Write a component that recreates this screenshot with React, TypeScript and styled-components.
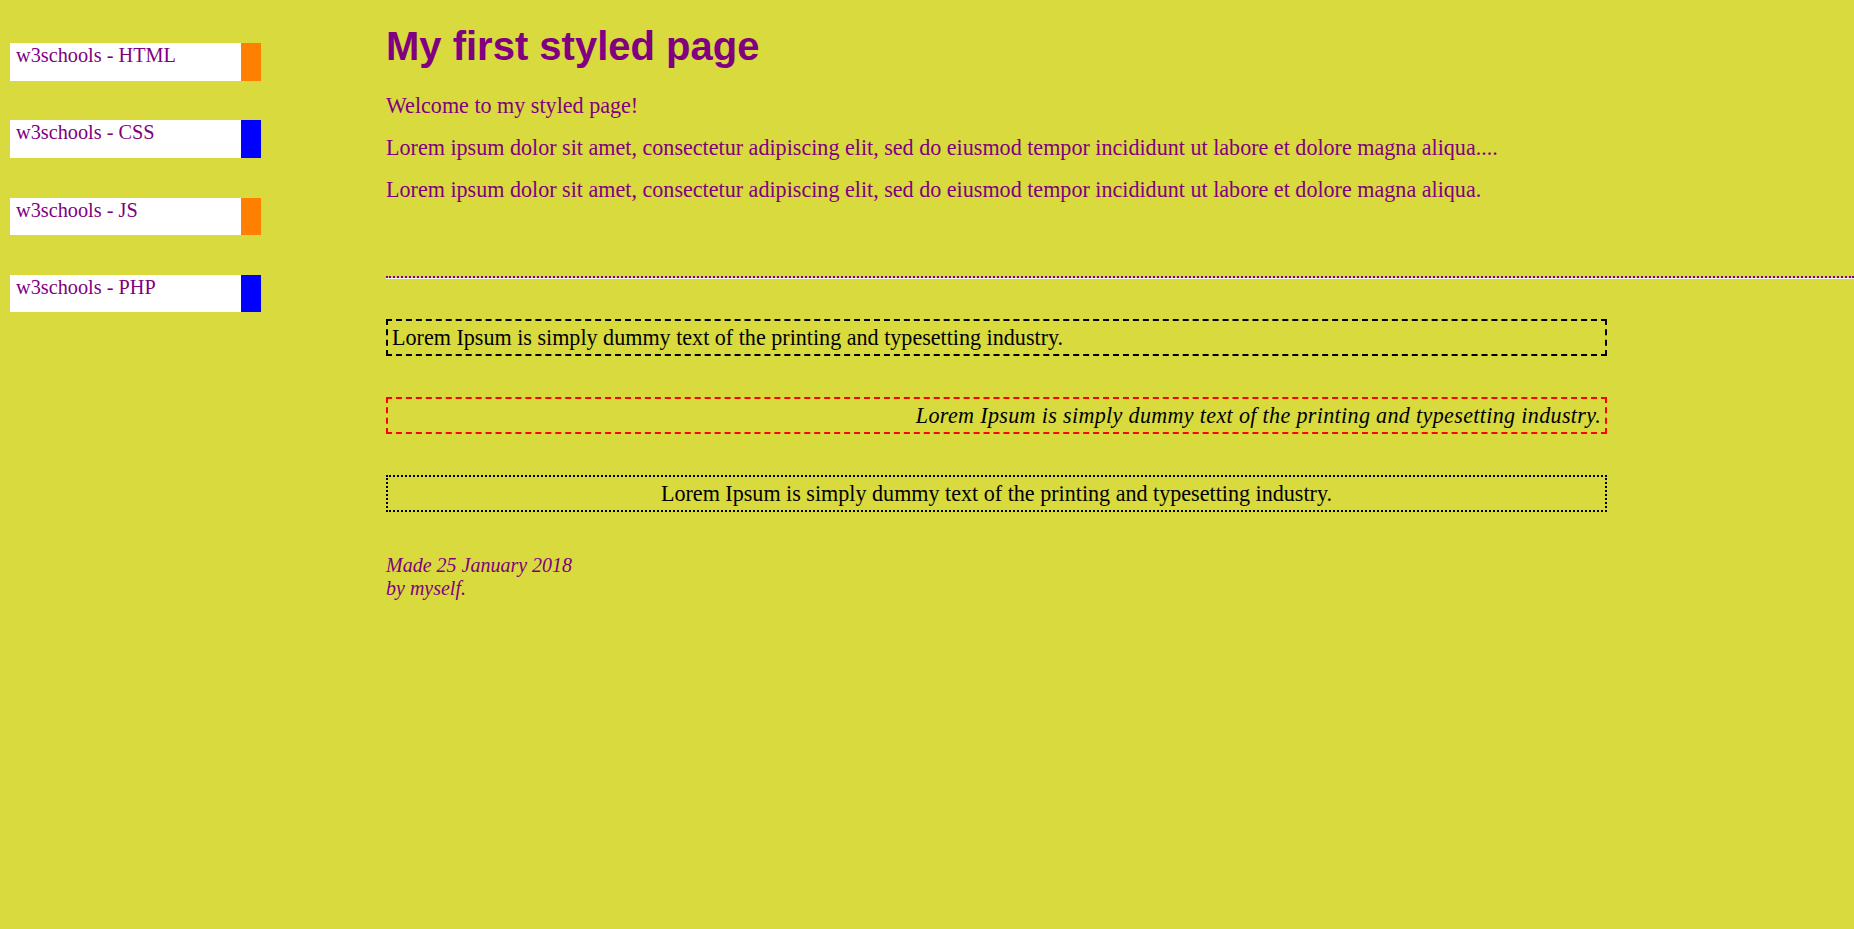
import React from "react";
import styled, { createGlobalStyle } from "styled-components";

const GlobalStyle = createGlobalStyle`
  html, body {
    margin: 0;
    padding: 0;
    background: #d8da3d;
  }
  body {
    font-family: "Liberation Serif", "Times New Roman", serif;
    color: #800080;
  }
`;

const Page = styled.div`
  display: grid;
  grid-template-columns: 386px 1fr;
  min-height: 929px;
  background: #d8da3d;
`;

const NavList = styled.ul`
  list-style: none;
  margin: 0;
  padding: 43px 0 0 10px;
  display: flex;
  flex-direction: column;
  gap: 39.8px;
`;

const NavItem = styled.li<{ $accent: string }>`
  box-sizing: border-box;
  width: 251px;
  height: 37.5px;
  background: #ffffff;
  border-right: 20px solid ${(p) => p.$accent};
  padding: 1px 6px 0;
  font-size: 20.3px;
  line-height: 22px;
`;

const NavLink = styled.a`
  color: #800080;
  text-decoration: none;
`;

const Main = styled.main`
  padding-top: 23px;
  min-width: 0;
`;

const Title = styled.h1`
  margin: 0 0 26px;
  font-family: "Liberation Sans", Arial, sans-serif;
  font-weight: bold;
  font-size: 40px;
  line-height: 46px;
  color: #800080;
`;

const Para = styled.p`
  margin: 0 0 20px;
  font-size: 22.1px;
  line-height: 22px;
  color: #800080;
  white-space: nowrap;
`;

const Rule = styled.hr`
  margin: 75px 0 40px;
  height: 0;
  border: none;
  border-top: 2px dotted #800080;
  border-bottom: 1px solid #f4f4f4;
`;

const Boxes = styled.div`
  display: flex;
  flex-direction: column;
  gap: 41px;
`;

const Box = styled.div<{
  $line: "dashed" | "dotted";
  $color: string;
  $align: "left" | "center" | "right";
  $italic?: boolean;
}>`
  box-sizing: border-box;
  width: 1221px;
  height: 37px;
  border: 2px ${(p) => p.$line} ${(p) => p.$color};
  padding: 5px 4px 4px;
  font-size: 22.1px;
  line-height: 23px;
  color: #000000;
  white-space: nowrap;
  text-align: ${(p) => p.$align};
  font-style: ${(p) => (p.$italic ? "italic" : "normal")};
  letter-spacing: ${(p) => (p.$italic ? "0.33px" : "normal")};
`;

const Footer = styled.address`
  margin-top: 42px;
  font-family: "Liberation Serif", "Times New Roman", serif;
  font-style: italic;
  font-size: 20px;
  line-height: 23px;
  color: #800080;
`;

const navItems = [
  { label: "w3schools - HTML", accent: "#ff8000" },
  { label: "w3schools - CSS", accent: "#0000ff" },
  { label: "w3schools - JS", accent: "#ff8000" },
  { label: "w3schools - PHP", accent: "#0000ff" },
];

const lorem = "Lorem Ipsum is simply dummy text of the printing and typesetting industry.";

export default function App() {
  return (
    <>
      <GlobalStyle />
      <Page>
        <NavList>
          {navItems.map((n) => (
            <NavItem key={n.label} $accent={n.accent}>
              <NavLink href="#">{n.label}</NavLink>
            </NavItem>
          ))}
        </NavList>
        <Main>
          <Title>My first styled page</Title>
          <Para>Welcome to my styled page!</Para>
          <Para>
            Lorem ipsum dolor sit amet, consectetur adipiscing elit, sed do eiusmod tempor incididunt ut labore et dolore magna aliqua....
          </Para>
          <Para>
            Lorem ipsum dolor sit amet, consectetur adipiscing elit, sed do eiusmod tempor incididunt ut labore et dolore magna aliqua.
          </Para>
          <Rule />
          <Boxes>
            <Box $line="dashed" $color="#000000" $align="left">{lorem}</Box>
            <Box $line="dashed" $color="#ff0000" $align="right" $italic>{lorem}</Box>
            <Box $line="dotted" $color="#000000" $align="center">{lorem}</Box>
          </Boxes>
          <Footer>
            Made 25 January 2018
            <br />
            by myself.
          </Footer>
        </Main>
      </Page>
    </>
  );
}
